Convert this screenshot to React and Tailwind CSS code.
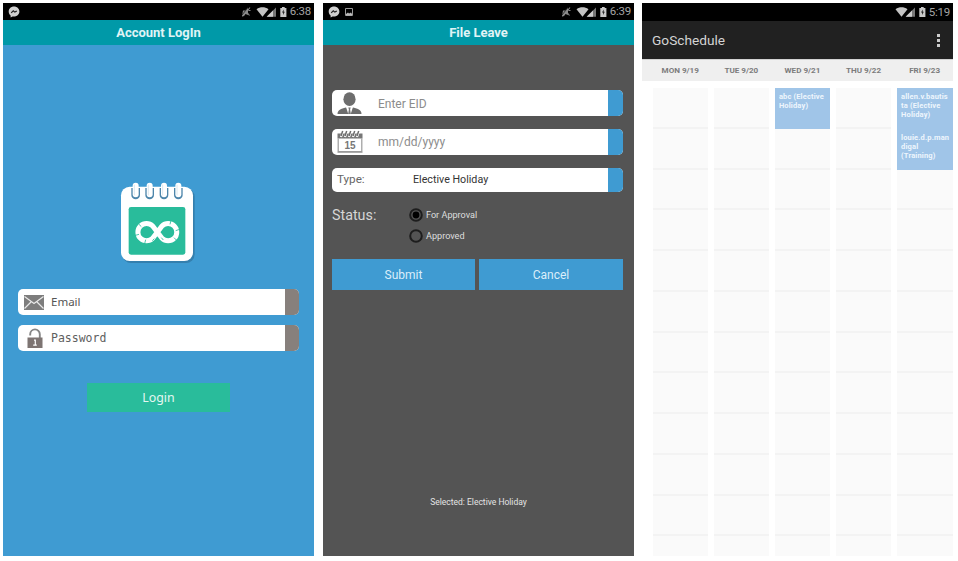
import React from "react";

function Messenger() {
  return (
    <svg width="12" height="12" viewBox="0 0 12 12" className="shrink-0">
      <path d="M6 .6C2.900 .6.700 2.800.700 5.600c0 1.600.700 3 1.900 3.900v2l1.900-1.100c3.700.9 6.900-1.500 6.900-4.800C11.400 2.800 9.100.6 6 .6z" fill="#d0d0d0" />
      <path d="m3.200 6.900 2.100-2 1.500 1.200L8.800 4.900" fill="none" stroke="#222" strokeWidth="1.200" />
    </svg>
  );
}

function Picture() {
  return (
    <svg width="10" height="10" viewBox="0 0 10 10" className="ml-[4px] shrink-0">
      <path d="M1.500 1.500h7v7h-7z" fill="none" stroke="#999" />
      <path d="M2 8.500V7l2-1.500 1 1L7 5.500 8 7v1.500z" fill="#bbb" />
    </svg>
  );
}

function Muted() {
  return (
    <svg width="10" height="12" viewBox="0 0 10 12" className="shrink-0">
      <path d="M2 4.500h2L7 1.500v7.500L4.500 8 3 10H1z" fill="#8b8b8b" />
      <path d="M9 1.500 1.500 10.500M7.500 4.500h2M6.500 7l2 2.500" fill="none" stroke="#8b8b8b" strokeWidth="1.100" />
      <path d="M7 1.500 1 9" fill="none" stroke="#000" strokeWidth=".6" />
    </svg>
  );
}

function Signals() {
  return (
    <svg width="33" height="12" viewBox="0 0 33 12" className="shrink-0">
      <path d="M.5 3.200C4.200.6 8.800.6 12.500 3.200L6.500 10.800z" fill="#c4c4c4" />
      <path d="M20 1.500v9.300h-9.300z" fill="#777" />
      <path d="M17 4.500v6.300h-6.300z" fill="#ccc" />
      <path d="M24.300 2h1.700V1h2.700v1h1.700v9h-6.100z" fill="#c9c9c9" />
      <path d="m27.700 3.500-1.700 3h1.100v2.500l1.700-3.200h-1.100z" fill="#222" />
    </svg>
  );
}

function StatusBar({ time, muted, messenger, picture, className }) {
  return (
    <div className={"flex shrink-0 items-center bg-black pl-[5px] pr-[3px] " + className}>
      {messenger && <Messenger />}
      {picture && <Picture />}
      <div className="ml-auto flex items-center">
        {muted && <Muted />}
        <div className="ml-[5px] flex"><Signals /></div>
        <span className="w-[22px] whitespace-nowrap pt-px text-right text-[11.500px] leading-none tracking-[-0.2px] text-[#a4a4a4]">{time}</span>
      </div>
    </div>
  );
}

function TitleBar({ children }) {
  return (
    <div className="flex h-[25px] shrink-0 items-center justify-center bg-[#0099a8] pt-px text-[13px] font-bold text-[#e0f4f6]">
      {children}
    </div>
  );
}

function Logo() {
  return (
    <svg width="120" height="100" viewBox="0 0 360 300" className="ml-[97px] shrink-0">
      <rect x="67" y="55" width="217" height="224" rx="26" fill="#347fae" />
      <rect x="63" y="50" width="216" height="223" rx="26" fill="#fff" />
      <rect x="86" y="111" width="170" height="143" rx="7" fill="#29bc9b" />
      {[107, 149, 192, 235].map((x) => (
        <g key={x}>
          <path d={`M${x - 13} 54v21a13 13 0 0 0 26 0V54`} fill="#4d86ab" />
          <rect x={x - 9} y="38" width="18" height="44" rx="9" fill="#fff" />
          <path d={`M${x - 4} 44v32`} stroke="#dce8ef" strokeWidth="3" />
        </g>
      ))}
      <path
        d="M158 168A26 26 0 1 0 158 205L186 168A26 26 0 1 1 186 205Z"
        fill="none" stroke="#fff" strokeWidth="15" strokeLinejoin="round"
      />
      <path d="m116 162 8 8M106 196l11-3M134 221l3-12M157 212l6-6M213 151l-3 12M239 178l-12 4M230 211l-8-8M190 210l-6-7" stroke="#29bc9b" strokeWidth="2.500" />
    </svg>
  );
}

function Envelope() {
  return (
    <svg width="20" height="15" viewBox="0 0 20 15">
      <path d="M0 0h20v15H0z" fill="#7d7d7d" />
      <path d="m.5 1.500 9.500 7L19.500 1.500M.5 13.500 7 7M19.500 13.500 13 7" fill="none" stroke="#e8e8e8" strokeWidth="1.200" />
    </svg>
  );
}

function Lock() {
  return (
    <svg width="16" height="21" viewBox="0 0 16 21">
      <path d="M3.200 7.500V6.200a4.800 4.800 0 0 1 9.600 0V10" fill="none" stroke="#858585" strokeWidth="1.900" />
      <path d="M.5 9.500h15v10.500H.5z" fill="#7d7472" />
      <path d="M7 12.200h1.300v5M6.200 17.200h3.600" fill="none" stroke="#fff" strokeWidth="1.200" />
    </svg>
  );
}

function Person() {
  return (
    <svg width="25" height="23" viewBox="0 0 25 23">
      <ellipse cx="12.500" cy="7.200" rx="6.100" ry="6.900" fill="#6d6d6d" />
      <path d="M.5 22c0-4 3.500-5.500 8.300-6.500h7.400c4.800 1 8.300 2.500 8.300 6.500z" fill="#6d6d6d" />
      <path d="m9 15 2.300 7h2.400L16 15z" fill="#fff" />
      <path d="m11.300 15.500h2.400l-.6 2 .8 4.500h-2.800l.8-4.500z" fill="#777" />
    </svg>
  );
}

function CalendarIcon() {
  return (
    <svg width="26" height="24" viewBox="0 0 26 24">
      <path d="M.5 3.500h25V8.500H.5z" fill="#777" />
      <path d="M1.200 8.500v13h23.600v-13" fill="none" stroke="#9a9a9a" strokeWidth="1.200" />
      <path d="M.5 22.300h25" stroke="#999" />
      <path d="m4 7 2-6M8 7l2-6M12 7l2-6M16 7l2-6M20 7l2-6" stroke="#fff" strokeWidth="2.200" />
      <path d="m4 6 1.700-5M8 6l1.700-5M12 6l1.700-5M16 6l1.700-5M20 6l1.700-5" stroke="#6d6d6d" strokeWidth="1.500" />
      <text x="13" y="18.800" textAnchor="middle" fontFamily="Liberation Sans, sans-serif" fontWeight="700" fontSize="10" fill="#777">15</text>
    </svg>
  );
}

function Field({ className, accent, children }) {
  return (
    <div className={"flex shrink-0 items-center overflow-hidden rounded-[5px] bg-white " + className}>
      {children}
      <div className={"ml-auto h-full shrink-0 " + accent} />
    </div>
  );
}

function Login() {
  return (
    <section className="flex h-[553px] w-[311px] flex-col bg-[#3f9bd2]">
      <StatusBar className="h-[17px]" time="6:38" muted messenger />
      <TitleBar>Account LogIn</TitleBar>
      <div className="mt-[125px] flex"><Logo /></div>
      <Field className="ml-[15px] mt-[19px] h-[26px] w-[281px]" accent="w-[14px] bg-[#87807c]">
        <div className="ml-[6px] w-[27px]"><Envelope /></div>
        <span className="font-['Noto_Sans'] text-[11.500px] text-[#555]">Email</span>
      </Field>
      <Field className="ml-[15px] mt-[10px] h-[26px] w-[281px]" accent="w-[14px] bg-[#87807c]">
        <div className="ml-[9px] w-[24px]"><Lock /></div>
        <span className="pt-[2px] font-['DejaVu_Sans_Mono'] text-[11.500px] text-[#606060]">Password</span>
      </Field>
      <button className="ml-[84px] mt-[32px] flex h-[29px] w-[143px] items-center justify-center bg-[#29bc9b] pt-px font-['Noto_Sans'] text-[12.400px] text-[#e4f7f2]">Login</button>
    </section>
  );
}

function Radio({ checked, label }) {
  return (
    <div className="flex h-[21px] items-center">
      <svg width="14" height="14" viewBox="0 0 14 14">
        <circle cx="7" cy="7" r="5.800" fill="none" stroke="#1d1d1d" strokeWidth="2" />
        {checked && <circle cx="7" cy="7" r="3.400" fill="#000" />}
      </svg>
      <span className="ml-[3px] pt-[2px] text-[9.100px] text-[#dedede]">{label}</span>
    </div>
  );
}

function FileLeave() {
  return (
    <section className="ml-[9px] flex h-[553px] w-[311px] flex-col bg-[#545454]">
      <StatusBar className="h-[17px]" time="6:39" muted messenger picture />
      <TitleBar>File Leave</TitleBar>
      <Field className="ml-[9px] mt-[45px] h-[26px] w-[291px]" accent="w-[15px] bg-[#3f9bd2]">
        <div className="ml-[5px] w-[41px]"><Person /></div>
        <span className="pt-px text-[12px] text-[#8c8c8c]">Enter EID</span>
      </Field>
      <Field className="ml-[9px] mt-[13px] h-[26px] w-[291px]" accent="w-[15px] bg-[#3f9bd2]">
        <div className="ml-[5px] w-[41px]"><CalendarIcon /></div>
        <span className="text-[12px] text-[#8c8c8c]">mm/dd/yyyy</span>
      </Field>
      <Field className="ml-[9px] mt-[13px] h-[24px] w-[291px]" accent="w-[15px] bg-[#3f9bd2]">
        <span className="ml-[5px] w-[76px] text-[11.700px] text-[#666]">Type:</span>
        <span className="pt-px text-[10.700px] text-[#333]">Elective Holiday</span>
      </Field>
      <div className="ml-[9px] mt-[12px] flex h-[43px] shrink-0">
        <span className="w-[77px] pt-px text-[14.300px] leading-[20px] text-[#d6d6d6]">Status:</span>
        <div>
          <Radio checked label="For Approval" />
          <Radio label="Approved" />
        </div>
      </div>
      <div className="ml-[9px] mt-[12px] flex h-[31px] w-[291px] shrink-0 gap-[4px] text-[12px] text-[#dbeefa]">
        <button className="w-[143px] bg-[#3f9bd2]">Submit</button>
        <button className="w-[144px] bg-[#3f9bd2]">Cancel</button>
      </div>
      <p className="mt-[206px] text-center text-[8.500px] text-[#e4e4e4]">Selected: Elective Holiday</p>
    </section>
  );
}

const days = [
  { name: "MON 9/19" },
  { name: "TUE 9/20" },
  { name: "WED 9/21", events: [["abc (Elective", "Holiday)"]] },
  { name: "THU 9/22" },
  { name: "FRI 9/23", events: [["allen.v.bautis", "ta (Elective", "Holiday)"], ["louie.d.p.man", "digal", "(Training)"]] },
];

function Day({ events = [] }) {
  return (
    <div className="h-full w-[55.500px] shrink-0 overflow-hidden bg-[#fafafa]">
      {Array.from({ length: 12 }, (_, i) =>
        events[i] ? (
          <div key={i} className="h-[40.750px] bg-[#a0c5e8] pl-[4px] pt-[4px] text-[7.500px] font-bold leading-[9px] tracking-[0.15px] text-[#eef6fd]">
            {events[i].map((line) => (
              <div key={line} className="whitespace-nowrap">{line}</div>
            ))}
          </div>
        ) : (
          <div key={i} className="h-[40.750px] border-b-2 border-[#f3f3f3]" />
        )
      )}
    </div>
  );
}

function Schedule() {
  return (
    <section className="ml-[8px] flex h-[553px] w-[311px] flex-col bg-white">
      <StatusBar className="h-[18px]" time="5:19" />
      <div className="flex h-[38px] shrink-0 items-center bg-[#212121] pl-[10px] pr-[13px] text-[13.700px] text-[#d4d4d4]">
        GoSchedule
        <div className="ml-auto flex flex-col gap-[2px]">
          <i className="size-[3px] bg-[#ccc]" />
          <i className="size-[3px] bg-[#ccc]" />
          <i className="size-[3px] bg-[#ccc]" />
        </div>
      </div>
      <div className="flex h-[22px] shrink-0 gap-[5.600px] border-t border-[#d2d2d2] bg-[#efefef] pl-[10.500px]">
        {days.map((d) => (
          <div key={d.name} className="flex w-[55.500px] shrink-0 items-center justify-center whitespace-nowrap text-[8.100px] font-bold text-[#7c7c7c]">{d.name}</div>
        ))}
      </div>
      <div className="mt-[7px] flex min-h-0 flex-1 gap-[5.600px] overflow-hidden pl-[10.700px]">
        {days.map((d) => <Day key={d.name} events={d.events} />)}
      </div>
    </section>
  );
}

export default function App() {
  return (
    <main className="flex h-[561px] w-[958px] overflow-hidden bg-white pl-[3px] pt-[3px] font-['Roboto',sans-serif]">
      <Login />
      <FileLeave />
      <Schedule />
    </main>
  );
}
